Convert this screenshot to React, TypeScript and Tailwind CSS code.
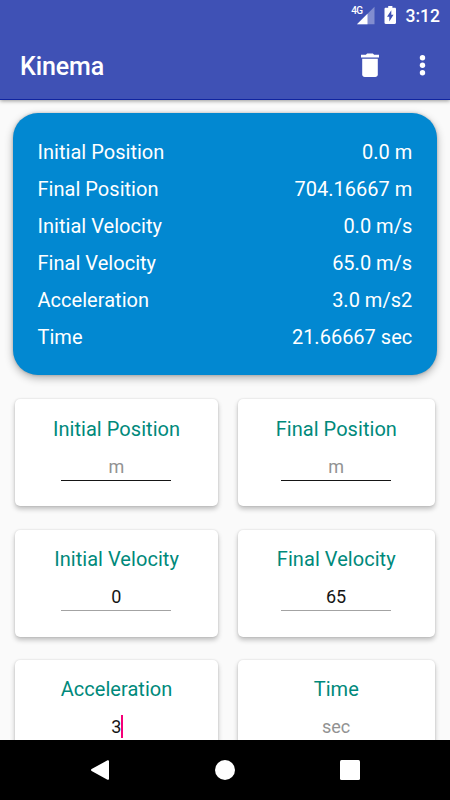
const results = [
  ['Initial Position', '0.0 m'],
  ['Final Position', '704.16667 m'],
  ['Initial Velocity', '0.0 m/s'],
  ['Final Velocity', '65.0 m/s'],
  ['Acceleration', '3.0 m/s2'],
  ['Time', '21.66667 sec'],
];

type Field = { label: string; unit: string; value?: string; focused?: boolean };

const fields: Field[] = [
  { label: 'Initial Position', unit: 'm' },
  { label: 'Final Position', unit: 'm' },
  { label: 'Initial Velocity', unit: 'm/s', value: '0' },
  { label: 'Final Velocity', unit: 'm/s', value: '65' },
  { label: 'Acceleration', unit: 'm/s2', value: '3', focused: true },
  { label: 'Time', unit: 'sec' },
];

function StatusBar() {
  return (
    <div className="flex h-[30px] shrink-0 items-start justify-end pr-[10px] text-white">
      <span className="mt-[5px] text-[10px] leading-[11px] font-medium tracking-[-0.6px]">4G</span>
      <svg className="-ml-[7px] mt-[6px] h-[19px] w-[19px]" viewBox="0 0 19 19">
        <path d="M1 18.300 L18.500 .8 V18.300 Z" fill="#fff" fillOpacity=".35" />
        <path d="M1 18.300 L11.500 7.800 V18.300 Z" fill="#fff" />
      </svg>
      <svg className="ml-[9px] mt-[6px] h-[18px] w-[13px]" viewBox="0 0 13 18">
        <path d="M4.200 0h4.200v1.800h2.400c.7 0 1.200.5 1.200 1.200v13.800c0 .7-.5 1.200-1.200 1.200H1.700C1 18 .5 17.500.5 16.800V3c0-.7.5-1.200 1.200-1.200h2.500z" fill="#fff" />
        <path d="M7.300 4.200v4.600h2.200L5.300 15.600v-4.900H3z" fill="#3f51b5" />
      </svg>
      <span className="ml-[9px] mt-[6px] text-[17.500px] leading-[21px] font-medium">3:12</span>
    </div>
  );
}

function Toolbar() {
  return (
    <div className="flex h-[69px] shrink-0 items-center justify-between pr-[20px] pl-[20px] text-white">
      <h1 className="pt-[4px] text-[25px] leading-[30px] font-medium tracking-[-0.1px]">Kinema</h1>
      <div className="flex items-center gap-[36px]">
        <svg className="h-[24px] w-[18px]" viewBox="0 0 18 24" fill="#fff">
          <path d="M0 1.800h4.900L6.100.400h5.800l1.200 1.400H18v2.800H0z" />
          <path d="M1.200 5.800h15.600v15.700c0 1.400-1.100 2.500-2.500 2.500H3.700c-1.400 0-2.500-1.100-2.500-2.500z" />
        </svg>
        <svg className="h-[22px] w-[15px]" viewBox="0 0 15 22" fill="#fff">
          <circle cx="7.500" cy="3.700" r="2.700" />
          <circle cx="7.500" cy="11.200" r="2.700" />
          <circle cx="7.500" cy="18.700" r="2.700" />
        </svg>
      </div>
    </div>
  );
}

function FieldCard({ label, unit, value, focused }: Field) {
  return (
    <section className="flex h-[107px] flex-col items-center rounded-[5px] bg-white pt-[17.300px] shadow-[0_3px_5px_rgba(0,0,0,0.24),0_0_2px_rgba(0,0,0,0.14)]">
      <h2 className="text-[20px] leading-[24px] tracking-[0.05px] text-[#00897b]">{label}</h2>
      <div
        className={`mt-[12px] -ml-px flex h-[28.400px] w-[110px] justify-center border-b text-[18px] leading-[27px] ${
          value ? 'border-[#a3a3a3] text-[#151515]' : 'border-[#151515] text-[#929292]'
        }`}
      >
        <span className="relative left-[0.300px]">
          {value ?? unit}
          {focused && <i className="absolute top-[2px] left-full h-[23px] w-[2px] bg-[#f50077]" />}
        </span>
      </div>
    </section>
  );
}

function NavigationBar() {
  return (
    <nav className="relative flex h-[60px] shrink-0 items-center justify-between bg-black px-[90px]">
      <svg className="h-[20px] w-[20px]" viewBox="0 0 20 20" fill="#fff">
        <path d="M17.500.300C18.200-.1 19 .3 19 1v18c0 .7-.8 1.100-1.500.7L1.600 10.900c-.8-.5-.8-1.300 0-1.800z" />
      </svg>
      <span className="h-[20px] w-[20px] rounded-full bg-white" />
      <span className="h-[20px] w-[20px] rounded-[1.500px] bg-white" />
    </nav>
  );
}

export default function App() {
  return (
    <div className="flex h-[800px] w-[450px] flex-col overflow-hidden bg-[#fafafa] font-[Roboto,sans-serif]">
      <header className="relative flex h-[100px] shrink-0 flex-col border-b border-[#1024a0] bg-[#3f51b5] shadow-[0_1px_4px_rgba(0,0,0,0.4)]">
        <StatusBar />
        <Toolbar />
      </header>
      <main className="min-h-0 flex-1 overflow-hidden pt-[12.500px]">
        <dl className="mr-[12.800px] ml-[12.500px] flex h-[262.500px] flex-col rounded-[25px] bg-[#0288d1] px-[25px] pt-[21px] text-[20px] text-white shadow-[0_3px_8px_rgba(0,0,0,0.3),0_0_3px_rgba(0,0,0,0.2)]">
          {results.map(([name, amount]) => (
            <div key={name} className="flex h-[37px] shrink-0 items-center justify-between">
              <dt className="tracking-[0.03px]">{name}</dt>
              <dd>{amount}</dd>
            </div>
          ))}
        </dl>
        <div className="mt-[24.250px] grid grid-cols-[202.500px_197px] gap-x-[20px] gap-y-[23.300px] pl-[15.300px]">
          {fields.map((field) => (
            <FieldCard key={field.label} {...field} />
          ))}
        </div>
      </main>
      <NavigationBar />
    </div>
  );
}
